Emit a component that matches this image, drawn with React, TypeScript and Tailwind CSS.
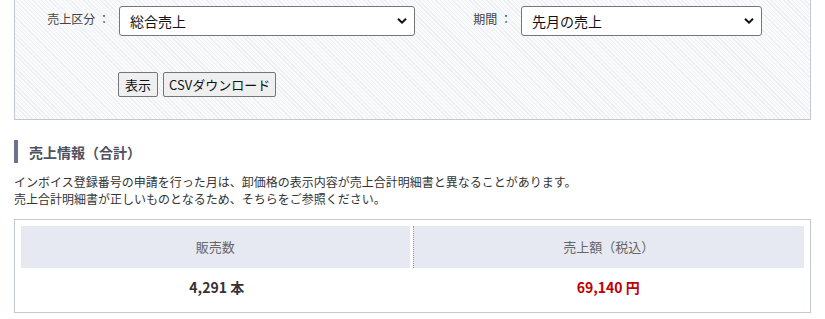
import React from 'react';

const Chevron = () => (
  <svg viewBox="0 0 10 7" className="pointer-events-none absolute right-[8px] top-1/2 h-[7px] w-[10px] -translate-y-1/2">
    <path d="M1 1.2 L5 5.2 L9 1.2" fill="none" stroke="#111" strokeWidth="2" />
  </svg>
);

const Select = ({ value, width }: { value: string; width: string }) => (
  <div className={`relative ${width}`}>
    <select
      defaultValue={value}
      className="h-[30px] w-full appearance-none rounded-[3px] border border-[#767676] bg-white pl-[10px] text-[14px] text-[#111]"
    >
      <option>{value}</option>
    </select>
    <Chevron />
  </div>
);

const App: React.FC = () => {
  return (
    <div className="w-[825px] h-[319px] overflow-hidden bg-white font-['Noto_Sans_CJK_JP',sans-serif] text-[#333]">
      <div className="mx-[14px] border-x border-b border-[#c3c8d4] bg-[repeating-linear-gradient(45deg,#eef0f4_0px,#eef0f4_1px,#f9fafc_1px,#f9fafc_3px)] pt-[6px] pb-[22px]">
        <div className="flex items-start">
          <div className="w-[95px] pt-[3px] text-right text-[12px] leading-[20px] text-[#444]">売上区分 ：</div>
          <div className="ml-[9px]">
            <Select value="総合売上" width="w-[296px]" />
          </div>
          <div className="w-[97px] pt-[3px] text-right text-[12px] leading-[20px] text-[#444]">期間 ：</div>
          <div className="ml-[9px]">
            <Select value="先月の売上" width="w-[241px]" />
          </div>
        </div>
        <div className="mt-[36px] flex gap-[5px] pl-[103px]">
          <button className="h-[25px] rounded-[2px] border border-[#767676] bg-[#efefef] px-[6px] text-[13px] leading-none text-[#111]">
            表示
          </button>
          <button className="h-[25px] rounded-[2px] border border-[#767676] bg-[#efefef] px-[5px] text-[13px] leading-none text-[#111]">
            CSVダウンロード
          </button>
        </div>
      </div>

      <div className="mx-[14px] mt-[20px] flex items-center">
        <div className="h-[23px] w-[4px] bg-[#6c7390]" />
        <h2 className="ml-[11px] text-[14px] font-bold leading-none text-[#4d5260]">売上情報（合計）</h2>
      </div>

      <div className="mx-[14px] mt-[10px] text-[12px] leading-[17px] text-[#333]">
        <p>インボイス登録番号の申請を行った月は、卸価格の表示内容が売上合計明細書と異なることがあります。</p>
        <p>売上合計明細書が正しいものとなるため、そちらをご参照ください。</p>
      </div>

      <div className="mx-[14px] mt-[12px] border border-[#c3c8d4] bg-white p-[6px]">
        <div className="grid grid-cols-2">
          <div className="flex h-[42px] items-center justify-center border-r-[3px] border-r-white bg-[#e6e8f2] text-[13px] text-[#666]">
            販売数
          </div>
          <div className="flex h-[42px] items-center justify-center border-l border-dotted border-l-[#9a9ca4] bg-[#e6e8f2] text-[13px] text-[#666]">
            売上額（税込）
          </div>
          <div className="flex h-[38px] items-center justify-center text-[14px] font-bold text-[#333]">4,291 本</div>
          <div className="flex h-[38px] items-center justify-center text-[14px] font-bold text-[#c00000]">69,140 円</div>
        </div>
      </div>
    </div>
  );
};

export default App;
